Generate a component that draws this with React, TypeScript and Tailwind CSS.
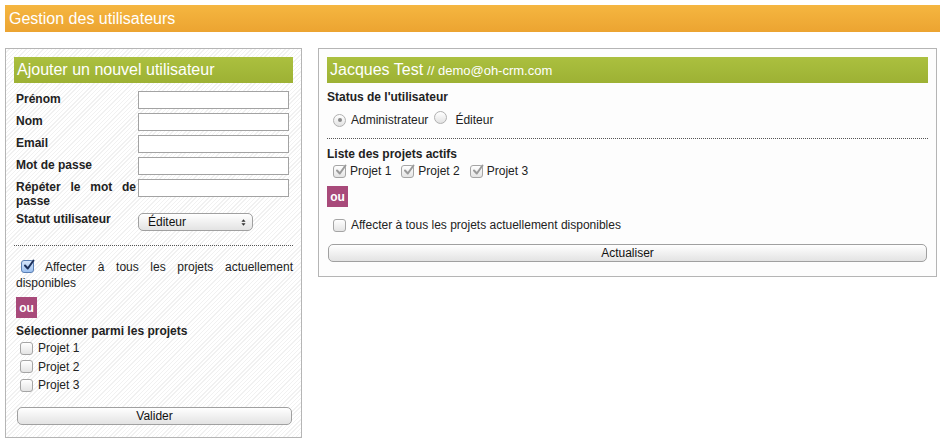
import React from 'react';

const FONT = "font-['Liberation_Sans',Arial,sans-serif]";

const Checkbox = ({ checked = false, disabled = false }: { checked?: boolean; disabled?: boolean }) => (
  <span
    className={`relative inline-flex h-[13px] w-[13px] shrink-0 items-center justify-center rounded-[3px] border ${
      checked && !disabled
        ? 'border-[#5a7fb5] bg-gradient-to-b from-[#d6e6fb] to-[#9cc0ef]'
        : 'border-[#a5a5a5] bg-gradient-to-b from-[#ffffff] to-[#e4e4e4]'
    }`}
  >
    {checked && (
      <svg viewBox="0 0 12 12" className="absolute -top-[2px] left-[1px] h-[12px] w-[12px]">
        <path
          d="M2 6.5 L4.8 9.5 L10.5 1.5"
          fill="none"
          stroke={disabled ? '#9a9a9a' : '#1b2f5a'}
          strokeWidth="2"
          strokeLinecap="round"
          strokeLinejoin="round"
        />
      </svg>
    )}
  </span>
);

const Radio = ({ checked = false }: { checked?: boolean }) => (
  <span className="inline-flex h-[13px] w-[13px] shrink-0 items-center justify-center rounded-full border border-[#b0b0b0] bg-gradient-to-b from-[#ffffff] to-[#e2e2e2]">
    {checked && <span className="h-[4px] w-[4px] rounded-full bg-[#8a8a8a]" />}
  </span>
);

const Ou = () => (
  <div className="flex h-[21px] w-[21px] items-center justify-center bg-[#a84a7a] text-[12px] font-bold text-white">
    ou
  </div>
);

const Button = ({ label }: { label: string }) => (
  <button className="h-[18px] w-full rounded-[5px] border border-[#a0a0a0] bg-gradient-to-b from-[#ffffff] to-[#e3e3e3] text-[12px] leading-[16px] text-[#111]">
    {label}
  </button>
);

const Field = ({ label }: { label: string }) => (
  <div className="flex items-start">
    <div className="w-[122px] pt-[1px] text-[12px] font-bold leading-[14px] text-[#222]">{label}</div>
    <input className="h-[18px] w-[151px] border border-[#a3a3a3] bg-white" />
  </div>
);

const GreenTitle = ({ children }: { children: React.ReactNode }) => (
  <div className="flex h-[26px] items-center bg-gradient-to-b from-[#abc03f] to-[#9db134] px-[3px] text-[16px] text-white">
    {children}
  </div>
);

export default function App() {
  return (
    <div className={`${FONT} min-h-[443px] bg-white p-[5px] text-[12px] text-[#222]`}>
      <div className="flex h-[27px] w-[935px] items-center bg-gradient-to-b from-[#f5b640] to-[#eca431] px-[4px] text-[16px] text-white">
        Gestion des utilisateurs
      </div>

      <div className="mt-[16px] flex items-start">
        {/* left panel */}
        <div className="w-[297px] border border-[#b5b5b5] bg-[image:repeating-linear-gradient(135deg,#ffffff_0px,#ffffff_2px,#f1f1f1_2px,#f1f1f1_3px)] px-[8px] pb-[12px] pt-[8px]">
          <GreenTitle>Ajouter un nouvel utilisateur</GreenTitle>

          <div className="mt-[8px] flex flex-col gap-[4px] pl-[2px]">
            <Field label="Prénom" />
            <Field label="Nom" />
            <Field label="Email" />
            <Field label="Mot de passe" />
            <div className="flex items-start">
              <div className="w-[122px] pr-[2px] pt-[1px] text-justify text-[12px] font-bold leading-[14px] text-[#222]">
                Répéter le mot de passe
              </div>
              <input className="h-[18px] w-[151px] border border-[#a3a3a3] bg-white" />
            </div>
            <div className="flex items-start">
              <div className="w-[122px] text-[12px] font-bold leading-[14px] text-[#222]">Statut utilisateur</div>
              <div className="mt-[1px] flex h-[18px] w-[115px] items-center justify-between rounded-[5px] border border-[#a0a0a0] bg-gradient-to-b from-[#ffffff] to-[#e3e3e3] pl-[9px] pr-[6px] text-[12px] text-[#111]">
                <span>Éditeur</span>
                <svg viewBox="0 0 6 10" className="h-[9px] w-[5px]">
                  <path d="M0.5 4 L3 1 L5.5 4 Z M0.5 6 L3 9 L5.5 6 Z" fill="#333" />
                </svg>
              </div>
            </div>
          </div>

          <div className="mt-[14px] border-t border-dotted border-[#555]" />

          <div className="mt-[12px] pl-[2px] text-justify text-[12px] leading-[16px] [text-align-last:left]">
            <span className="mr-[11px] ml-[5px] inline-flex translate-y-[2px]">
              <Checkbox checked />
            </span>
            Affecter à tous les projets actuellement disponibles
          </div>

          <div className="mt-[6px] pl-[2px]">
            <Ou />
          </div>

          <div className="mt-[6px] pl-[2px] text-[12px] font-bold leading-[14px]">Sélectionner parmi les projets</div>
          <div className="mt-[1px] flex flex-col pl-[6px]">
            {['Projet 1', 'Projet 2', 'Projet 3'].map((p) => (
              <div key={p} className="flex h-[18.5px] items-center gap-[5px] text-[12px]">
                <Checkbox />
                <span>{p}</span>
              </div>
            ))}
          </div>

          <div className="mt-[12px] pl-[3px] pr-[1px]">
            <Button label="Valider" />
          </div>
        </div>

        {/* right panel */}
        <div className="ml-[16px] w-[619px] border border-[#b5b5b5] bg-[#fdfdfd] px-[8px] pb-[14px] pt-[8px]">
          <GreenTitle>
            <span>Jacques Test</span>
            <span className="ml-[4px] mt-[2px] text-[13px]">// demo@oh-crm.com</span>
          </GreenTitle>

          <div className="mt-[7px] text-[12px] font-bold leading-[14px]">Status de l'utilisateur</div>
          <div className="mt-[7px] flex items-center pl-[6px] text-[12px]">
            <Radio checked />
            <span className="ml-[5px]">Administrateur</span>
            <span className="ml-[6px]">
              <Radio />
            </span>
            <span className="ml-[8px]">Éditeur</span>
          </div>

          <div className="mt-[9px] border-t border-dotted border-[#555]" />

          <div className="mt-[8px] text-[12px] font-bold leading-[14px]">Liste des projets actifs</div>
          <div className="mt-[1px] flex items-center pl-[6px] text-[12px]">
            {['Projet 1', 'Projet 2', 'Projet 3'].map((p) => (
              <div key={p} className="mr-[10px] flex items-center gap-[4px]">
                <Checkbox checked disabled />
                <span>{p}</span>
              </div>
            ))}
          </div>

          <div className="mt-[6px]">
            <Ou />
          </div>

          <div className="mt-[9px] flex items-center gap-[5px] pl-[6px] text-[12px]">
            <Checkbox />
            <span>Affecter à tous les projets actuellement disponibles</span>
          </div>

          <div className="mt-[10px] pl-[1px] pr-[1px]">
            <Button label="Actualiser" />
          </div>
        </div>
      </div>
    </div>
  );
}
